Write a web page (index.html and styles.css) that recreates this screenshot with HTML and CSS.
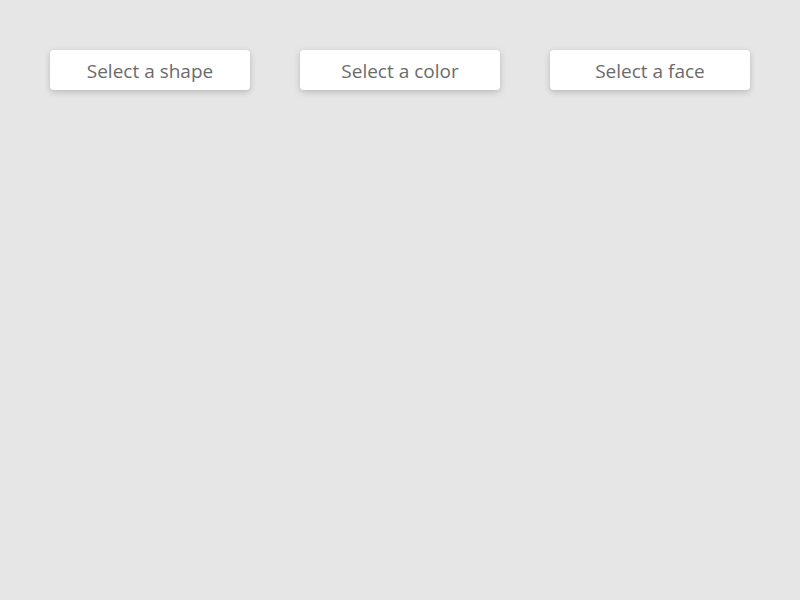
FILE: index.html
```html
<!DOCTYPE html>
<html>
<head>
<meta charset="utf-8">
<link rel="stylesheet" href="styles.css">
</head>
<body>
<div class="bar">
  <button class="select">Select a shape</button>
  <button class="select">Select a color</button>
  <button class="select">Select a face</button>
</div>
</body>
</html>
```
FILE: styles.css
```css
html, body { margin: 0; padding: 0; }
body {
  background: #e6e6e6;
  width: 800px;
  height: 600px;
  font-family: "Open Sans", "Noto Sans", sans-serif;
}
.bar {
  display: flex;
  gap: 50px;
  padding: 50px 50px 0 50px;
}
.select {
  width: 200px;
  height: 40px;
  border: none;
  border-radius: 4px;
  background: #fff;
  box-shadow: 0 2px 6px rgba(0,0,0,0.2);
  color: #6b6b6b;
  font-family: "Open Sans", "Noto Sans", sans-serif;
  font-size: 19px;
  padding: 1px 0 0 0;
  cursor: pointer;
}
```
